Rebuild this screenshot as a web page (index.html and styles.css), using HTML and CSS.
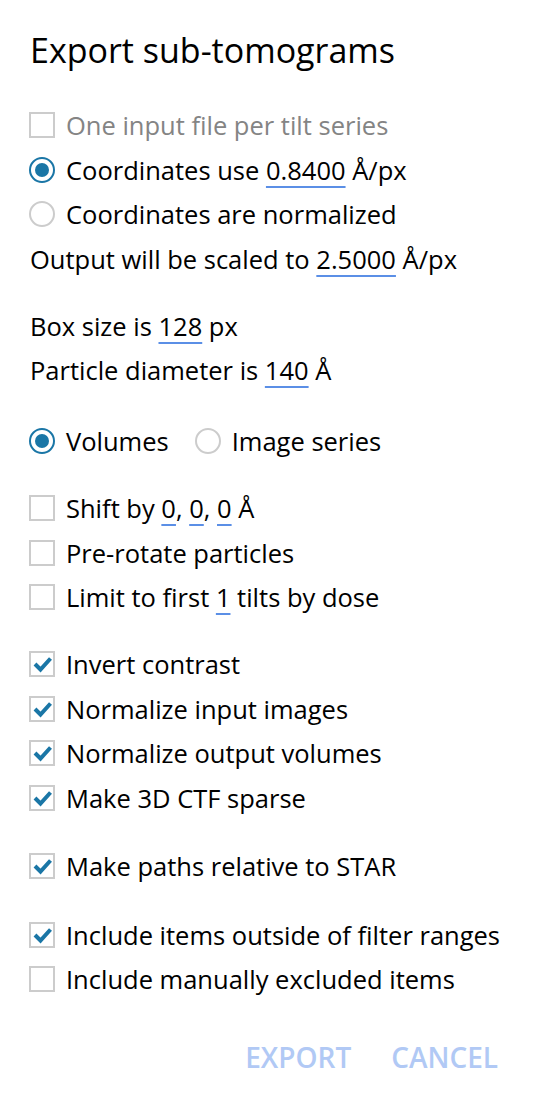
FILE: index.html
```html
<!DOCTYPE html>
<html>
<head>
<meta charset="utf-8">
<link rel="stylesheet" href="styles.css">
</head>
<body>
<div class="dialog">
  <h1 class="title">Export sub-tomograms</h1>

  <div class="group first">
    <div class="row disabled"><span class="box"></span><span class="label">One input file per tilt series</span></div>
    <div class="row"><span class="radio on"></span><span class="label">Coordinates use <span class="val">0.8400</span> Å/px</span></div>
    <div class="row"><span class="radio"></span><span class="label">Coordinates are normalized</span></div>
    <div class="row plain"><span class="label">Output will be scaled to <span class="val">2.5000</span> Å/px</span></div>
  </div>

  <div class="group tight">
    <div class="row plain"><span class="label">Box size is <span class="val">128</span> px</span></div>
    <div class="row plain"><span class="label">Particle diameter is <span class="val">140</span> Å</span></div>
  </div>

  <div class="group loose">
    <div class="row">
      <span class="radio on"></span><span class="label">Volumes</span>
      <span class="radio second"></span><span class="label">Image series</span>
    </div>
  </div>

  <div class="group tight">
    <div class="row"><span class="box"></span><span class="label">Shift by <span class="val">0</span>, <span class="val">0</span>, <span class="val">0</span> Å</span></div>
    <div class="row"><span class="box"></span><span class="label">Pre-rotate particles</span></div>
    <div class="row"><span class="box"></span><span class="label">Limit to first <span class="val">1</span> tilts by dose</span></div>
  </div>

  <div class="group tight">
    <div class="row"><span class="box"><svg viewBox="0 0 26 26"><path d="M6 13 L11.5 18.5 L21.5 7.5"/></svg></span><span class="label">Invert contrast</span></div>
    <div class="row"><span class="box"><svg viewBox="0 0 26 26"><path d="M6 13 L11.5 18.5 L21.5 7.5"/></svg></span><span class="label">Normalize input images</span></div>
    <div class="row"><span class="box"><svg viewBox="0 0 26 26"><path d="M6 13 L11.5 18.5 L21.5 7.5"/></svg></span><span class="label">Normalize output volumes</span></div>
    <div class="row"><span class="box"><svg viewBox="0 0 26 26"><path d="M6 13 L11.5 18.5 L21.5 7.5"/></svg></span><span class="label">Make 3D CTF sparse</span></div>
  </div>

  <div class="group">
    <div class="row"><span class="box"><svg viewBox="0 0 26 26"><path d="M6 13 L11.5 18.5 L21.5 7.5"/></svg></span><span class="label">Make paths relative to STAR</span></div>
  </div>

  <div class="group">
    <div class="row"><span class="box"><svg viewBox="0 0 26 26"><path d="M6 13 L11.5 18.5 L21.5 7.5"/></svg></span><span class="label">Include items outside of filter ranges</span></div>
    <div class="row"><span class="box"></span><span class="label">Include manually excluded items</span></div>
  </div>

  <div class="actions">
    <span class="btn">EXPORT</span>
    <span class="btn">CANCEL</span>
  </div>
</div>
</body>
</html>
```

FILE: styles.css
```css
html, body {
  margin: 0;
  padding: 0;
  background: #ffffff;
}

body {
  font-family: "Open Sans", "Noto Sans", "Liberation Sans", sans-serif;
  color: #000000;
}

.dialog {
  width: 535px;
  padding: 0 0 0 29px;
  box-sizing: border-box;
}

.title {
  margin: 0;
  padding: 28px 0 0 1px;
  height: 102.75px;
  box-sizing: border-box;
  font-size: 34px;
  font-weight: 400;
  line-height: 44px;
}

.group {
  margin-top: 24px;
}

.group.first {
  margin-top: 0;
}

.group.tight {
  margin-top: 22.5px;
}

.group.loose {
  margin-top: 26.5px;
}

.row {
  display: flex;
  align-items: center;
  height: 44.5px;
  font-size: 25.5px;
  white-space: nowrap;
}

.label {
  padding-top: 0.8px;
}

.row.plain {
  padding-left: 1px;
}

.row.disabled {
  color: #848484;
}

.box {
  flex: none;
  width: 26px;
  height: 26px;
  box-sizing: border-box;
  border: 2px solid #cccccc;
  margin-right: 11px;
  position: relative;
}

.box svg {
  position: absolute;
  left: -2px;
  top: -2px;
  width: 26px;
  height: 26px;
}

.box svg path {
  fill: none;
  stroke: #1a76a6;
  stroke-width: 4;
  stroke-linecap: butt;
  stroke-linejoin: miter;
}

.radio {
  flex: none;
  width: 26px;
  height: 26px;
  box-sizing: border-box;
  border: 2px solid #cccccc;
  border-radius: 50%;
  margin-right: 11px;
  position: relative;
}

.radio.on {
  border-color: #1a76a6;
}

.radio.on::after {
  content: "";
  position: absolute;
  left: 4px;
  top: 4px;
  width: 14px;
  height: 14px;
  border-radius: 50%;
  background: #1a76a6;
}

.radio.second {
  margin-left: 26px;
}

.val {
  text-decoration: underline;
  text-decoration-color: #5b8fe6;
  text-decoration-thickness: 2px;
  text-underline-offset: 6px;
}

.actions {
  display: flex;
  justify-content: flex-end;
  gap: 40px;
  padding: 36px 37px 0 0;
}

.btn {
  font-size: 28px;
  font-weight: 600;
  color: #b1c9f5;
  line-height: 40px;
}
```
